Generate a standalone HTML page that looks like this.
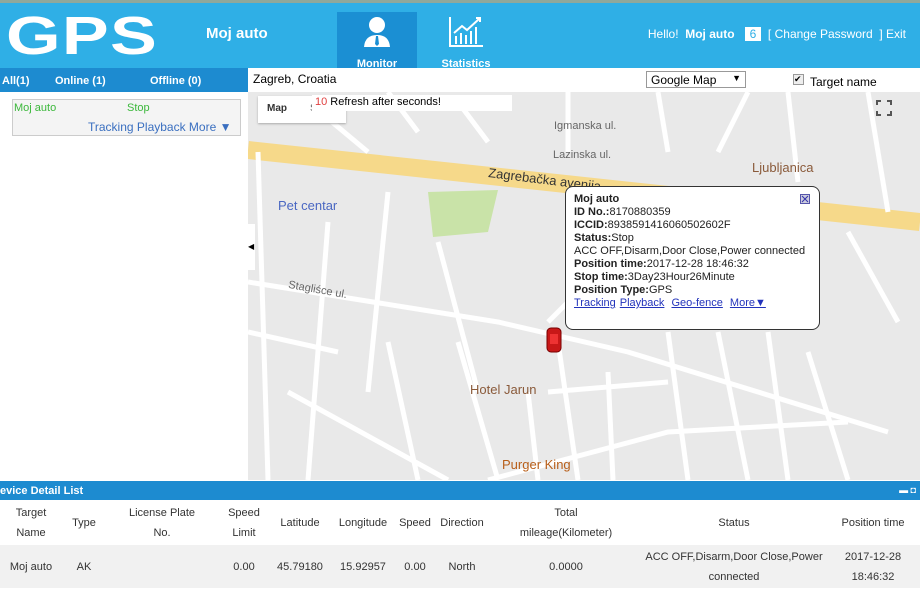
<!DOCTYPE html>
<html><head><meta charset="utf-8"><style>
*{margin:0;padding:0;box-sizing:border-box}
body{width:920px;height:597px;overflow:hidden;font-family:"Liberation Sans",Arial,sans-serif;background:#fff;position:relative}
.hdr{position:absolute;left:0;top:0;width:920px;height:68px;background:#2fafe6;border-top:3px solid #8fa89b}
.logo{position:absolute;left:6px;top:5px;font:900 54px/56px "Liberation Sans",sans-serif;color:#fff;letter-spacing:1px;transform:scaleX(1.3);transform-origin:left}
.name{position:absolute;left:206px;top:22px;color:#fff;font-weight:bold;font-size:15px}
.tab{position:absolute;top:9px;width:80px;height:59px;color:#fff;font-weight:bold;font-size:11px;text-align:center}
.tab span{position:absolute;bottom:1px;left:0;right:0}
.hello{position:absolute;right:14px;top:24px;color:#fff;font-size:12px}
.side{position:absolute;left:0;top:68px;width:248px;height:24px;background:#1d8bd0;color:#fff;font-weight:bold;font-size:11px}
.side span{position:absolute;top:7px}
.dev{position:absolute;left:12px;top:99px;width:229px;height:37px;border:1px solid #ccc;background:#f4f4f4;font-size:11px}
.map{position:absolute;left:248px;top:92px;width:672px;height:388px;background:#e9e9e9;overflow:hidden}
.bar{position:absolute;left:248px;top:68px;width:672px;height:24px;background:#fff;font-size:12px}
.pop{position:absolute;left:565px;top:186px;width:255px;height:144px;background:#fff;border:1px solid #333;border-radius:8px;font-size:11px;line-height:13px;padding:6px 8px;color:#222}
.pop a{color:#2233bb;text-decoration:underline;margin-right:4px}
.bp{position:absolute;left:0;top:481px;width:920px;height:116px;background:#fff}
.bt{height:19px;background:#1d8bd0;color:#fff;font-weight:bold;font-size:11px;padding:4px 0 0 0}
table{border-collapse:collapse;font-size:11px;color:#333;width:920px;table-layout:fixed}
th{font-weight:normal;height:45px;line-height:20px;text-align:center}
td{height:43px;background:#f1f1f1;text-align:center;line-height:20px}
</style></head><body>
<div class="hdr">
<div class="logo">GPS</div>
<div class="name">Moj auto</div>
<div class="tab" style="left:337px;background:#1b8fd3">
<svg width="30" height="34" viewBox="0 0 30 34" style="margin-top:3px"><circle cx="15" cy="10" r="8" fill="#fff"/><path d="M2 32 Q3 20 15 20 Q27 20 28 32Z" fill="#fff"/><path d="M14 21h2l1 8-2 2-2-2z" fill="#1b8fd3"/></svg>
<span>Monitor</span></div>
<div class="tab" style="left:426px">
<svg width="38" height="34" viewBox="0 0 38 34" style="margin-top:3px" fill="none" stroke="#fff" stroke-width="2"><path d="M3 2v29h33"/><path d="M9 29v-8M14 29v-11M19 29v-9M24 29v-13M29 29v-17M7 18l8-7 5 4 12-11M29 3h4v4"/></svg>
<span>Statistics</span></div>
<div class="hello">Hello! &nbsp;<b>Moj auto</b> &nbsp; <span style="background:#fff;color:#2fafe6;padding:0 5px">6</span> &nbsp;[ Change Password &nbsp;] Exit</div>
</div>
<div class="side"><span style="left:2px">All(1)</span><span style="left:55px">Online (1)</span><span style="left:150px">Offline (0)</span></div>
<div class="dev"><span style="position:absolute;left:1px;top:2px;color:#3cb83c">Moj auto</span><span style="position:absolute;left:114px;top:2px;color:#3cb83c">Stop</span><span style="position:absolute;left:75px;top:20px;color:#3a6fc0;font-size:12px">Tracking Playback More ▼</span></div>
<div class="bar"><span style="position:absolute;left:5px;top:4px">Zagreb, Croatia</span>
<div style="position:absolute;left:398px;top:3px;width:100px;height:17px;border:1px solid #999;padding:1px 4px">Google Map <span style="float:right;font-size:9px">▼</span></div>
<span style="position:absolute;left:545px;top:6px;width:11px;height:11px;border:1px solid #999;background:#eee;font-size:9px;line-height:9px">✔</span>
<span style="position:absolute;left:562px;top:7px">Target name</span></div>
<div class="map">
<svg width="672" height="388" style="position:absolute;left:0;top:0" fill="none" stroke="#fff" stroke-width="5">
<path d="M0 58 L672 130" stroke="#f6d98a" stroke-width="18"/>
<path d="M180 100 L250 98 L240 140 L185 145Z" fill="#c9e3a8" stroke="none"/>
<path d="M0 190 L250 230 L380 260 L640 340" />
<path d="M320 0 L320 60 M310 250 L330 388 M300 230 L330 200 L360 200 L372 110 L380 95 M10 60 L20 388 M80 130 L60 388 M140 250 L170 388 M140 100 L120 300 M210 250 L250 388 M280 300 L290 388 M360 280 L365 388 M190 150 L230 300 M60 10 L120 60 M140 0 L170 40 M210 10 L240 50 M410 0 L420 60 M500 0 L470 60 M540 0 L550 90 M620 0 L640 120 M40 300 L200 388 M240 388 L420 340 L600 330 M300 300 L420 290 M420 240 L440 388 M470 240 L500 388 M520 240 L540 388 M560 260 L600 388 M440 150 L520 190 M600 140 L650 230 M0 240 L90 260"/>
</svg>
<div style="position:absolute;left:10px;top:4px;width:88px;height:27px;background:#fff;font-size:10px;box-shadow:0 1px 2px #aaa"><b style="position:absolute;left:9px;top:7px;color:#333">Map</b><span style="position:absolute;left:52px;top:7px;color:#666">Sa</span></div>
<div style="position:absolute;left:64px;top:3px;width:200px;height:16px;background:#fff;font-size:11px;padding:1px 3px"><span style="color:#e04040">10</span> Refresh after seconds!</div>
<span style="position:absolute;left:30px;top:106px;color:#4a67c2;font-size:13px">Pet centar</span>
<span style="position:absolute;left:240px;top:80px;color:#333;font-size:13px;transform:rotate(7deg)">Zagrebačka avenija</span>
<span style="position:absolute;left:222px;top:290px;color:#8a5a3a;font-size:13px">Hotel Jarun</span>
<span style="position:absolute;left:254px;top:365px;color:#b85f1a;font-size:13px">Purger King</span>
<span style="position:absolute;left:504px;top:68px;color:#8a5a3a;font-size:13px">Ljubljanica</span>
<span style="position:absolute;left:40px;top:192px;color:#666;font-size:11px;transform:rotate(10deg)">Stagliśce ul.</span>
<span style="position:absolute;left:306px;top:28px;color:#666;font-size:11px">Igmanska ul.</span>
<span style="position:absolute;left:305px;top:57px;color:#666;font-size:11px">Lazinska ul.</span>
<svg width="16" height="16" style="position:absolute;right:28px;top:8px" fill="none" stroke="#555" stroke-width="2"><path d="M1 5V1h4M11 1h4v4M15 11v4h-4M5 15H1v-4"/></svg>
<div style="position:absolute;left:0;top:132px;width:7px;height:46px;background:#fff;font-size:8px;line-height:46px">◀</div>
<svg width="18" height="28" style="position:absolute;left:297px;top:234px"><rect x="2" y="2" width="14" height="24" rx="4" fill="#c81818" stroke="#700" /><rect x="5" y="8" width="8" height="10" fill="#e33"/></svg>
</div>
<div class="pop">
<svg width="10" height="10" style="position:absolute;right:9px;top:7px"><rect x=".5" y=".5" width="9" height="9" fill="#ccd" stroke="#55a"/><path d="M2 2l6 6M8 2l-6 6" stroke="#33a"/></svg>
<b>Moj auto</b><br><b>ID No.:</b>8170880359<br><b>ICCID:</b>8938591416060502602F<br><b>Status:</b>Stop<br>ACC OFF,Disarm,Door Close,Power connected<br><b>Position time:</b>2017-12-28 18:46:32<br><b>Stop time:</b>3Day23Hour26Minute<br><b>Position Type:</b>GPS<br><a>Tracking</a><a>Playback</a> <a>Geo-fence</a> <a>More▼</a>
</div>
<div class="bp"><div class="bt">evice Detail List<span style="float:right;margin-right:4px;font-size:9px">▬ ◘</span></div>
<table><tr><th style="width:62px">Target<br>Name</th><th style="width:44px">Type</th><th style="width:112px">License Plate<br>No.</th><th style="width:52px">Speed<br>Limit</th><th style="width:60px">Latitude</th><th style="width:66px">Longitude</th><th style="width:38px">Speed</th><th style="width:56px">Direction</th><th style="width:152px">Total<br>mileage(Kilometer)</th><th style="width:184px">Status</th><th>Position time</th></tr>
<tr><td>Moj auto</td><td>AK</td><td></td><td>0.00</td><td>45.79180</td><td>15.92957</td><td>0.00</td><td>North</td><td>0.0000</td><td>ACC OFF,Disarm,Door Close,Power<br>connected</td><td>2017-12-28<br>18:46:32</td></tr></table>
</div>
</body></html>
